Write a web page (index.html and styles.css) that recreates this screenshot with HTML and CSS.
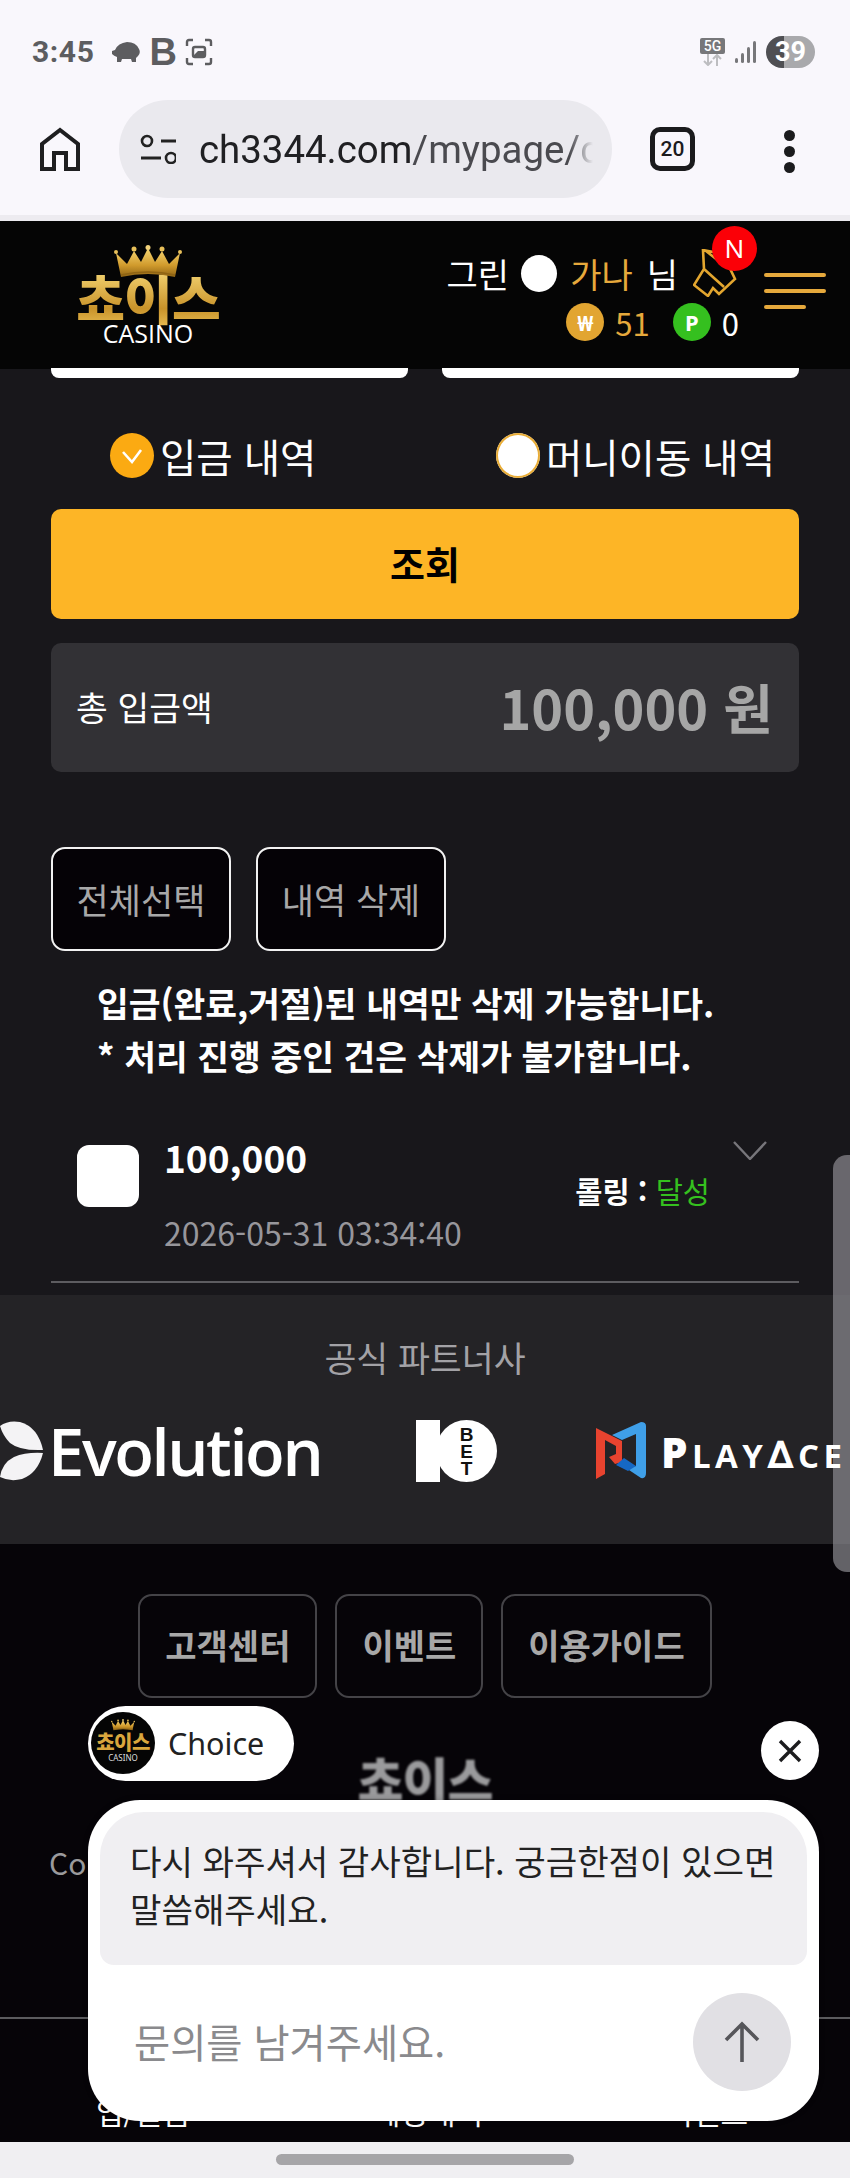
FILE: index.html
```html
<!DOCTYPE html>
<html lang="ko">
<head>
    <meta charset="UTF-8">
    <meta name="viewport" content="width=device-width, initial-scale=1.0">
    <title>Choice Casino</title>
    <link rel="stylesheet" href="styles.css">
</head>
<body>

<svg class="defs" width="0" height="0">
    <defs>
        <linearGradient id="gold" x1="0" y1="0" x2="0" y2="1">
            <stop offset="0" stop-color="#f7d774"/>
            <stop offset="0.6" stop-color="#d09a2c"/>
            <stop offset="1" stop-color="#8f6414"/>
        </linearGradient>
        <symbol id="crown" viewBox="0 0 68 34">
            <path d="M7 32 L2 8 L13 19 L20 6 L27 17 L34 3 L41 17 L48 6 L55 19 L66 8 L61 32 Q34 26 7 32Z" fill="url(#gold)"/>
            <path d="M7 30 Q34 24 61 30" fill="none" stroke="#8f6414" stroke-width="1.4"/>
            <circle cx="2" cy="7" r="2" fill="#e8c05a"/>
            <circle cx="20" cy="4" r="2.5" fill="#e8c05a"/>
            <circle cx="34" cy="2.5" r="2.5" fill="#f2d27a"/>
            <circle cx="48" cy="4" r="2.5" fill="#e8c05a"/>
            <circle cx="66" cy="7" r="2" fill="#e8c05a"/>
        </symbol>
    </defs>
</svg>

<div class="screen">

    <!-- Android status bar -->
    <div class="status-bar">
        <span class="clock">3:45</span>
        <svg class="piggy" viewBox="0 0 28 21" width="28" height="21">
            <path d="M0 10 L3 9 Q6 2 15 1 Q24 1 27 8 Q29 12 26 15 L24 17 V21 H20 L19 18 H10 L9 21 H5 V16 Q2 15 0 13Z" fill="#5d5d60"/>
        </svg>
        <span class="b-icon">B</span>
        <svg class="capture" viewBox="0 0 28 28" width="28" height="28">
            <path d="M2 8 V4 Q2 2 4 2 H8 M20 2 H24 Q26 2 26 4 V8 M26 20 V24 Q26 26 24 26 H20 M8 26 H4 Q2 26 2 24 V20" fill="none" stroke="#5d5d60" stroke-width="2.4"/>
            <rect x="8" y="9" width="12" height="10" rx="2" fill="none" stroke="#5d5d60" stroke-width="2.4"/>
            <path d="M9 17 L13 13 L19 13 V18 H9Z" fill="#5d5d60"/>
        </svg>
        <div class="status-right">
            <div class="net">
                <span class="net-5g">5G</span>
                <svg viewBox="0 0 25 12" width="25" height="12">
                    <path d="M8 0 V11 M4 7 L8 11 L12 7" fill="none" stroke="#bdbdc0" stroke-width="2"/>
                    <path d="M17 12 V1 M13 5 L17 1 L21 5" fill="none" stroke="#bdbdc0" stroke-width="2"/>
                </svg>
            </div>
            <svg class="signal" viewBox="0 0 22 24" width="22" height="24">
                <rect x="0" y="18" width="3" height="5" rx="1.5" fill="#77777a"/>
                <rect x="6" y="13" width="3" height="10" rx="1.5" fill="#77777a"/>
                <rect x="12" y="7" width="3" height="16" rx="1.5" fill="#77777a"/>
                <rect x="18" y="1" width="3" height="22" rx="1.5" fill="#77777a"/>
            </svg>
            <span class="battery">39</span>
        </div>
    </div>

    <!-- Browser toolbar -->
    <div class="toolbar">
        <svg class="home" viewBox="0 0 40 44" width="40" height="44">
            <path d="M2 42 V17 L20 3 L38 17 V42 H26 V26 H14 V42Z" fill="none" stroke="#1e1e20" stroke-width="4"/>
        </svg>
        <div class="url-pill">
            <svg class="url-icon" viewBox="0 0 36 30" width="36" height="30">
                <circle cx="7" cy="7" r="5" fill="none" stroke="#222" stroke-width="2.6"/>
                <path d="M21 7 H36 M1 24 H21" stroke="#222" stroke-width="2.8"/>
                <circle cx="31" cy="24" r="5" fill="none" stroke="#222" stroke-width="2.6"/>
            </svg>
            <span class="url-text">ch3344.com<span class="url-path">/mypage/charge</span></span>
        </div>
        <span class="tabs">20</span>
        <div class="kebab"><i></i><i></i><i></i></div>
    </div>

    <!-- Site header -->
    <header class="site-header">
        <div class="logo">
            <svg class="logo-crown"><use href="#crown"/></svg>
            <span class="logo-word">쵸이스</span>
            <span class="logo-sub">CASINO</span>
        </div>
        <div class="user">
            <div class="user-name">
                <span>그린</span>
                <i class="grade"></i>
                <span class="gold">가나</span>
                <span class="sir">님</span>
                <div class="notice">
                    <svg viewBox="0 0 44 48" width="44" height="48">
                        <path d="M10 1 L30 5 L42 30 L26 45 L20 39 L15 47 L1 36 L11 20Z M11 20 L31 38 M27 13 L13 2" fill="none" stroke="#e3a62f" stroke-width="2.6"/>
                    </svg>
                    <b class="badge">N</b>
                </div>
            </div>
            <div class="user-money">
                <i class="coin coin-won">₩</i>
                <span class="gold">51</span>
                <i class="coin coin-point">P</i>
                <span>0</span>
            </div>
        </div>
        <div class="burger"><i></i><i></i><i class="short"></i></div>
    </header>

    <main class="content">
        <div class="date-inputs"><i></i><i></i></div>

        <div class="radios">
            <label class="radio">
                <i class="radio-mark checked">
                    <svg viewBox="0 0 24 20" width="24" height="20"><path d="M3 6 L12 16 L21 4" fill="none" stroke="#fff" stroke-width="2.6"/></svg>
                </i>
                입금 내역
            </label>
            <label class="radio"><i class="radio-mark"></i>머니이동 내역</label>
        </div>

        <button class="search-btn">조회</button>

        <div class="total">
            <span>총 입금액</span>
            <strong>100,000 원</strong>
        </div>

        <div class="actions">
            <button class="action-btn">전체선택</button>
            <button class="action-btn wide">내역 삭제</button>
        </div>

        <p class="notes">입금(완료,거절)된 내역만 삭제 가능합니다.<br>* 처리 진행 중인 건은 삭제가 불가합니다.</p>

        <div class="history-item">
            <i class="check"></i>
            <div class="history-info">
                <div class="amount">100,000</div>
                <div class="date">2026-05-31 03:34:40</div>
            </div>
            <div class="history-side">
                <svg viewBox="0 0 34 19" width="34" height="19"><path d="M1 1 L17 18 L33 1" fill="none" stroke="#77767b" stroke-width="2.4"/></svg>
                <div class="rolling">롤링 : <span>달성</span></div>
            </div>
        </div>
    </main>

    <section class="partners">
        <h3>공식 파트너사</h3>
        <div class="partner-logos">
            <div class="evo">
                <svg viewBox="0 0 43 60" width="43" height="60">
                    <path d="M0 5 Q8 -1 20 1 Q38 6 43 29 Q20 30 10 22 Q3 15 0 5Z" fill="#f4f3f5"/>
                    <path d="M43 32 Q38 52 22 58 Q10 61 0 56 Q2 42 14 36 Q26 31 43 32Z" fill="#f4f3f5"/>
                </svg>
                <span>Evolution</span>
            </div>
            <div class="tenbet">
                <i class="tenbet-bar"></i>
                <div class="tenbet-o"><b>B</b><b>E</b><b>T</b></div>
            </div>
            <div class="playace">
                <svg viewBox="0 0 50 58" width="50" height="58">
                    <path d="M0 6 L26 19 V40 L19 42 L13 35 L20 32 V24 L9 18 V52 L0 57Z" fill="#e8432f"/>
                    <path d="M16 13 L45 0 Q50 0 50 4 V51 Q50 57 45 56 L30 46 L40 44 V12 L26 18Z" fill="#3f9fe8"/>
                    <path d="M20 43 L28 36 L40 44 L32 49Z" fill="#1668c4"/>
                </svg>
                <span class="playace-word"><b>P</b>LAY<span class="delta">∆</span>CE</span>
            </div>
        </div>
    </section>

    <footer class="site-footer">
        <div class="footer-links">
            <a class="footer-btn">고객센터</a>
            <a class="footer-btn">이벤트</a>
            <a class="footer-btn">이용가이드</a>
        </div>
        <div class="footer-logo">쵸이스</div>
        <div class="copyright">Copyright © Choice Casino. All rights reserved.</div>
        <nav class="bottom-nav">
            <span>입/출금</span>
            <span>베팅내역</span>
            <span>이벤트</span>
        </nav>
    </footer>

    <!-- Android gesture bar -->
    <div class="gesture-bar"><i></i></div>

    <div class="scroll-thumb"></div>

    <!-- Chat widget -->
    <div class="chat">
        <div class="chat-top">
            <div class="chat-name">
                <div class="avatar">
                    <svg class="avatar-crown"><use href="#crown"/></svg>
                    <span class="avatar-word">쵸이스</span>
                    <span class="avatar-sub">CASINO</span>
                </div>
                Choice
            </div>
            <button class="chat-close">
                <svg viewBox="0 0 24 24" width="24" height="24"><path d="M2 2 L22 22 M22 2 L2 22" stroke="#1c1c1e" stroke-width="3.4"/></svg>
            </button>
        </div>
        <div class="chat-card">
            <div class="bubble">다시 와주셔서 감사합니다. 궁금한점이 있으면<br>말씀해주세요.</div>
            <div class="chat-input">
                <span>문의를 남겨주세요.</span>
                <button class="send">
                    <svg viewBox="0 0 36 42" width="36" height="42"><path d="M18 41 V3 M2 19 L18 3 L34 19" fill="none" stroke="#56565a" stroke-width="3.6"/></svg>
                </button>
            </div>
        </div>
    </div>

</div>

</body>
</html>
```

FILE: styles.css
```css
* {
    margin: 0;
    padding: 0;
    box-sizing: border-box;
}

body {
    font-family: "Noto Sans CJK KR", "Noto Sans", sans-serif;
    background: #18171b;
    color: #fff;
}

i {
    font-style: normal;
    display: block;
}

button {
    font-family: inherit;
    border: none;
    cursor: pointer;
}

svg {
    flex-shrink: 0;
}

.defs {
    position: absolute;
}

.screen {
    position: relative;
    width: 850px;
    height: 2178px;
    overflow: hidden;
    display: flex;
    flex-direction: column;
}

/* Status bar */
.status-bar {
    height: 95px;
    background: #f9f7fc;
    display: flex;
    align-items: center;
    padding: 8px 35px 0 32px;
    flex-shrink: 0;
    color: #5d5d60;
}

.clock {
    font-family: "Roboto", sans-serif;
    font-weight: 700;
    font-size: 30px;
    letter-spacing: 0.6px;
    margin-right: 17px;
}

.b-icon {
    font-family: "Liberation Sans", sans-serif;
    font-weight: 700;
    font-size: 38px;
    line-height: 28px;
    margin: 0 8px 0 10px;
}

.status-right {
    margin-left: auto;
    display: flex;
    align-items: center;
}

.net {
    display: flex;
    flex-direction: column;
    align-items: center;
    width: 25px;
    margin-right: 10px;
}

.net-5g {
    display: block;
    width: 25px;
    height: 16px;
    background: #77777a;
    color: #fff;
    font-family: "Roboto", sans-serif;
    font-size: 14px;
    font-weight: 500;
    line-height: 16px;
    text-align: center;
    border-radius: 2px;
}

.signal {
    margin-right: 9px;
}

.battery {
    width: 49px;
    height: 32px;
    border-radius: 16px;
    background: linear-gradient(to right, #4f4f53 37%, #a9a9ac 37%);
    color: #fff;
    font-family: "Roboto", sans-serif;
    font-weight: 700;
    font-size: 27px;
    line-height: 32px;
    text-align: center;
}

/* Browser toolbar */
.toolbar {
    height: 126px;
    background: #f9f7fc;
    border-bottom: 6px solid #edebf0;
    display: flex;
    align-items: flex-start;
    padding: 5px 0 0 40px;
    flex-shrink: 0;
    position: relative;
}

.home {
    margin-top: 27px;
}

.url-pill {
    width: 493px;
    height: 98px;
    margin-left: 39px;
    border-radius: 49px;
    background: #eae9ee;
    display: flex;
    align-items: center;
    padding-left: 21px;
    color: #202023;
}

.url-text {
    width: 394px;
    margin-left: 23px;
    overflow: hidden;
    white-space: nowrap;
    font-family: "Roboto", sans-serif;
    font-size: 38.4px;
    -webkit-mask-image: linear-gradient(to right, #000 94%, transparent 100%);
    mask-image: linear-gradient(to right, #000 94%, transparent 100%);
}

.url-path {
    color: #4a4a4f;
}

.tabs {
    width: 45px;
    height: 44px;
    margin: 27px 0 0 38px;
    border: 5px solid #1b1b1d;
    border-radius: 10px;
    color: #1b1b1d;
    font-family: "Roboto", sans-serif;
    font-weight: 500;
    font-size: 21px;
    line-height: 34px;
    text-align: center;
}

.kebab {
    margin: 30px 0 0 89px;
    display: flex;
    flex-direction: column;
    gap: 5px;
}

.kebab i {
    width: 11px;
    height: 11px;
    border-radius: 50%;
    background: #1b1b1d;
}

/* Site header */
.site-header {
    height: 148px;
    background: #050505;
    display: flex;
    flex-shrink: 0;
    padding-left: 76px;
}

.logo {
    position: relative;
    width: 144px;
    padding-top: 47px;
    display: flex;
    flex-direction: column;
    align-items: center;
}

.logo-crown {
    position: absolute;
    left: 38px;
    top: 24px;
    width: 68px;
    height: 34px;
    z-index: 1;
}

.logo-word {
    display: block;
    white-space: nowrap;
    font-size: 53px;
    font-weight: 900;
    line-height: 58px;
    letter-spacing: -1px;
    background: linear-gradient(#f6d877, #c9932a 70%, #e5b94f);
    -webkit-background-clip: text;
    background-clip: text;
    color: transparent;
}

.logo-sub {
    display: block;
    font-family: "Open Sans", sans-serif;
    font-size: 25px;
    font-weight: 500;
    line-height: 24px;
    margin-top: -5px;
}

.user {
    margin-left: auto;
    padding-top: 30px;
    display: flex;
    flex-direction: column;
    align-items: flex-end;
    gap: 8px;
}

.user-name {
    display: flex;
    align-items: center;
    height: 44px;
    font-size: 34px;
    margin-right: 2px;
}

.grade {
    width: 36px;
    height: 37px;
    border-radius: 50%;
    background: #fff;
    margin: 0 13px 0 12px;
}

.sir {
    margin-left: 14px;
}

.gold {
    color: #e6a93c;
}

.notice {
    position: relative;
    width: 44px;
    height: 48px;
    margin-left: 15px;
}

.badge {
    position: absolute;
    left: 19px;
    top: -23px;
    width: 45px;
    height: 45px;
    border-radius: 50%;
    background: #fb0007;
    color: #fff;
    font-family: "Noto Sans", sans-serif;
    font-size: 26px;
    font-weight: 400;
    line-height: 45px;
    text-align: center;
}

.user-money {
    display: flex;
    align-items: center;
    height: 38px;
    font-size: 31px;
}

.coin {
    width: 38px;
    height: 38px;
    border-radius: 50%;
    color: #fff;
    font-family: "Noto Sans", sans-serif;
    font-size: 22px;
    font-weight: 700;
    line-height: 38px;
    text-align: center;
}

.coin-won {
    background: #e2a531;
    margin-right: 11px;
}

.coin-point {
    background: #35c01f;
    margin: 0 11px 0 23px;
}

.burger {
    width: 62px;
    margin: 52px 24px 0 25px;
    display: flex;
    flex-direction: column;
    gap: 12px;
}

.burger i {
    height: 4px;
    border-radius: 2px;
    background: #e6a93c;
}

.burger .short {
    width: 42px;
}

/* Main content */
.content {
    padding: 0 51px;
    flex-shrink: 0;
}

.date-inputs {
    display: flex;
    justify-content: space-between;
    margin-top: -1px;
}

.date-inputs i {
    width: 357px;
    height: 10px;
    background: #fff;
    border-radius: 0 0 8px 8px;
}

.radios {
    display: flex;
    justify-content: space-between;
    padding: 0 24px 0 59px;
    margin-top: 55px;
}

.radio {
    display: flex;
    align-items: center;
    gap: 6px;
    height: 45px;
    font-size: 39.5px;
    color: #fff;
}

.radio-mark {
    width: 44px;
    height: 45px;
    border-radius: 50%;
    background: #fff;
    box-shadow: inset 0 0 0 2px #e9ad37;
}

.radio-mark.checked {
    background: #fbaa12;
    box-shadow: none;
    display: flex;
    align-items: center;
    justify-content: center;
}

.search-btn {
    display: block;
    width: 100%;
    height: 110px;
    margin-top: 31px;
    padding-bottom: 4px;
    border-radius: 10px;
    background: #fdb526;
    color: #000;
    font-size: 38px;
    font-weight: 700;
}

.total {
    height: 129px;
    margin-top: 24px;
    padding: 0 26px 3px 25px;
    border-radius: 10px;
    background: #323135;
    display: flex;
    align-items: center;
    justify-content: space-between;
    font-size: 34.5px;
}

.total strong {
    font-size: 54px;
    font-weight: 700;
    color: #a6a6a6;
}

.actions {
    display: flex;
    gap: 25px;
    margin-top: 75px;
}

.action-btn {
    width: 180px;
    height: 104px;
    padding-bottom: 2px;
    background: #050206;
    border: 2px solid #f2f2f2;
    border-radius: 14px;
    color: #a8a8a8;
    font-size: 35px;
}

.action-btn.wide {
    width: 190px;
}

.notes {
    margin: 25px 0 0 46px;
    font-size: 34.5px;
    font-weight: 700;
    line-height: 53px;
    white-space: nowrap;
}

.history-item {
    display: flex;
    margin-top: 53px;
    padding: 0 0 24px 26px;
    border-bottom: 2px solid #5d5c60;
}

.check {
    width: 62px;
    height: 62px;
    margin-top: 10px;
    border-radius: 12px;
    background: #fff;
}

.history-info {
    margin-left: 25px;
    margin-top: -3px;
}

.amount {
    font-size: 37px;
    font-weight: 700;
    line-height: 50px;
}

.date {
    margin-top: 25px;
    font-size: 32px;
    line-height: 50px;
    color: #97969b;
}

.history-side {
    margin-left: auto;
    display: flex;
    flex-direction: column;
    align-items: flex-end;
    padding: 6px 32px 0 0;
}

.rolling {
    margin: 10px 57px 0 0;
    font-size: 29.5px;
    font-weight: 700;
    line-height: 40px;
}

.rolling span {
    color: #35c01f;
    font-weight: 400;
}

/* Partners */
.partners {
    height: 249px;
    margin-top: 12px;
    padding-top: 37px;
    background: #242326;
    flex-shrink: 0;
}

.partners h3 {
    font-size: 34.7px;
    font-weight: 400;
    line-height: 50px;
    text-align: center;
    color: #a3a2a6;
}

.partner-logos {
    position: relative;
    z-index: 2;
    display: flex;
    align-items: center;
    height: 62px;
    margin-top: 38px;
}

.evo {
    width: 318px;
    flex-shrink: 0;
    display: flex;
    align-items: center;
    gap: 5px;
}

.evo span {
    font-family: "Open Sans", sans-serif;
    font-size: 65px;
    font-weight: 600;
    letter-spacing: -2.4px;
    line-height: 62px;
}

.tenbet {
    display: flex;
    margin-left: 98px;
    width: 81px;
    flex-shrink: 0;
}

.tenbet-bar {
    width: 24px;
    height: 62px;
    background: #fff;
}

.tenbet-o {
    width: 61px;
    height: 62px;
    margin-left: -4px;
    border-radius: 50%;
    background: #fff;
    color: #111;
    display: flex;
    flex-direction: column;
    align-items: center;
    justify-content: center;
    font-family: "Liberation Sans", sans-serif;
    font-size: 19px;
    line-height: 17px;
}

.playace {
    display: flex;
    align-items: center;
    margin-left: 99px;
    gap: 15px;
    flex-shrink: 0;
}

.playace-word {
    font-family: "Open Sans", sans-serif;
    font-weight: 700;
    font-size: 33px;
    letter-spacing: 4.4px;
    white-space: nowrap;
}

.playace-word b {
    font-size: 42px;
}

.delta {
    font-family: "DejaVu Sans", sans-serif;
    font-size: 38px;
}

/* Footer */
.site-footer {
    flex: 1;
    background: #060408;
    display: flex;
    flex-direction: column;
    min-height: 0;
}

.footer-links {
    display: flex;
    justify-content: center;
    gap: 18px;
    margin-top: 50px;
}

.footer-btn {
    height: 104px;
    padding: 0 25px;
    border: 2px solid #444347;
    border-radius: 14px;
    color: #a8a8a8;
    font-size: 34px;
    font-weight: 700;
    line-height: 98px;
}

.footer-logo {
    margin-top: 45px;
    height: 70px;
    font-size: 50px;
    font-weight: 900;
    line-height: 70px;
    letter-spacing: -1px;
    text-align: center;
    color: #9a9a9c;
    filter: blur(1px);
}

.copyright {
    margin-top: 27px;
    padding-left: 49px;
    font-size: 30px;
    line-height: 44px;
    white-space: nowrap;
    color: #9a9a9c;
}

.bottom-nav {
    margin-top: 133px;
    flex: 1;
    border-top: 2px solid #5b5b5e;
    display: flex;
    justify-content: space-between;
    padding: 69px 102px 0 96px;
    font-size: 30px;
    line-height: 46px;
}

/* Gesture bar */
.gesture-bar {
    height: 36px;
    background: #f0eff2;
    flex-shrink: 0;
    display: flex;
    justify-content: center;
    padding-top: 12px;
}

.gesture-bar i {
    width: 298px;
    height: 11px;
    border-radius: 6px;
    background: #a6a5a8;
}

.scroll-thumb {
    position: absolute;
    right: 0;
    top: 1155px;
    width: 17px;
    height: 417px;
    border-radius: 14px 0 0 14px;
    background: rgba(139, 138, 144, 0.7);
    z-index: 1;
}

/* Chat widget */
.chat {
    position: absolute;
    left: 88px;
    top: 1706px;
    width: 731px;
    z-index: 3;
}

.chat-top {
    height: 94px;
    display: flex;
    justify-content: space-between;
    align-items: flex-start;
}

.chat-name {
    width: 206px;
    height: 75px;
    padding: 0 0 2px 3px;
    border-radius: 38px;
    background: #fff;
    color: #222;
    display: flex;
    align-items: center;
    gap: 13px;
    font-family: "Noto Sans", sans-serif;
    font-size: 30.5px;
}

.avatar {
    position: relative;
    width: 64px;
    height: 62px;
    border-radius: 50%;
    background: #050505;
    text-align: center;
    padding-top: 18px;
}

.avatar-crown {
    position: absolute;
    left: 20px;
    top: 7px;
    width: 24px;
    height: 12px;
}

.avatar-word {
    display: block;
    font-family: "Noto Sans CJK KR", sans-serif;
    font-size: 20px;
    font-weight: 900;
    line-height: 24px;
    letter-spacing: -0.5px;
    color: #d9a63d;
}

.avatar-sub {
    display: block;
    font-size: 8px;
    line-height: 8px;
    color: #ddd;
}

.chat-close {
    width: 58px;
    height: 59px;
    margin-top: 15px;
    border-radius: 50%;
    background: #fff;
    display: flex;
    align-items: center;
    justify-content: center;
}

.chat-card {
    height: 321px;
    padding: 12px 12px 0;
    border-radius: 52px;
    background: #fff;
    box-shadow: 0 0 6px rgba(0, 0, 0, 0.2);
}

.bubble {
    height: 153px;
    padding: 24px 0 0 30px;
    border-radius: 44px 44px 14px 14px;
    background: #f0eff2;
    color: #222;
    font-size: 34.2px;
    line-height: 48px;
    white-space: nowrap;
}

.chat-input {
    display: flex;
    align-items: center;
    justify-content: space-between;
    margin-top: 28px;
    padding: 0 16px 0 34px;
    font-size: 39.3px;
    color: #8a8a8d;
}

.chat-input span {
    margin-bottom: 4px;
}

.send {
    width: 98px;
    height: 98px;
    border-radius: 50%;
    background: #e1e0e4;
    display: flex;
    align-items: center;
    justify-content: center;
}
```
